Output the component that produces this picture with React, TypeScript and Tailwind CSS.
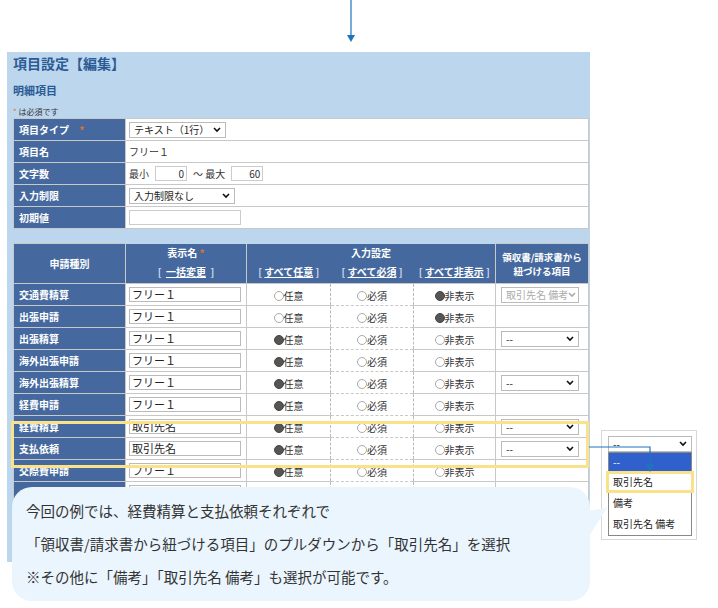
import React from "react";

const F = { fontFamily: '"Noto Sans CJK JP", "Noto Sans", sans-serif' };

function Radio({ on, label }: { on: boolean; label: string }) {
  return (
    <span className="inline-flex items-center text-[10px] leading-[12px] text-[#333] whitespace-nowrap">
      <span className={`inline-block w-[10px] h-[10px] rounded-full border ${on ? "bg-[#555] border-[#444]" : "bg-white border-[#aaa]"}`} />
      {label}
    </span>
  );
}

function Sel({ text, w, dim }: { text: string; w: number; dim?: boolean }) {
  return (
    <div className={`h-[16px] border border-[#bbb] bg-white flex items-center justify-between px-1 text-[10px] leading-[12px] whitespace-nowrap overflow-hidden ${dim ? "text-[#aaa]" : "text-[#222]"}`} style={{ width: w }}>
      <span>{text}</span>
      <svg width="8" height="6" viewBox="0 0 8 6" className="shrink-0"><path d="M1 1l3 3 3-3" stroke={dim ? "#aaa" : "#111"} strokeWidth="1.6" fill="none" /></svg>
    </div>
  );
}

const rows: [string, string, number, boolean | "dim"][] = [
  ["交通費精算", "フリー１", 2, "dim"],
  ["出張申請", "フリー１", 2, false],
  ["出張精算", "フリー１", 0, true],
  ["海外出張申請", "フリー１", 0, false],
  ["海外出張精算", "フリー１", 0, true],
  ["経費申請", "フリー１", 0, false],
  ["経費精算", "取引先名", 0, true],
  ["支払依頼", "取引先名", 0, true],
  ["交際費申請", "フリー１", 0, false],
  ["", "フリー１", 0, false],
];

export default function App() {
  const lab = "bg-[#45699e] text-white font-bold text-[10px] leading-[12px] px-[5px] py-0 border border-[#c8c8c8] whitespace-nowrap";
  const cell = "bg-white border border-[#c8c8c8] text-[10px] leading-[12px] text-[#333] py-0";
  return (
    <div className="relative w-[718px] h-[608px] bg-white overflow-hidden" style={F}>
      <svg className="absolute left-[345px] top-0" width="12" height="44" viewBox="0 0 12 44">
        <path d="M6 0v36" stroke="#1e73be" strokeWidth="1.2" />
        <path d="M2 35l4 7 4-7z" fill="#1e73be" />
      </svg>

      <div className="absolute left-[7px] top-[52px] w-[583px] h-[510px] bg-[#bcd6ee] px-[6px]">
        <div className="text-[14px] font-bold text-[#2b5b94] pt-[1px] leading-[20px]">項目設定【編集】</div>
        <div className="text-[11px] font-bold text-[#2b5b94] mt-[9px] leading-[16px]">明細項目</div>
        <div className="text-[8px] text-[#333] mt-[8px] leading-[11px]"><span className="text-[#e07030]">*</span> は必須です</div>
        <table className="border-collapse table-fixed w-[576px] mt-[1px]">
          <colgroup><col style={{ width: 112 }} /><col /></colgroup>
          <tbody>
            <tr className="h-[22px]"><td className={lab}>項目タイプ <span className="text-[#e07030] ml-2">*</span></td><td className={cell + " px-[3px]"}><Sel text="テキスト（1行）" w={97} /></td></tr>
            <tr className="h-[22px]"><td className={lab}>項目名</td><td className={cell + " px-[3px]"}>フリー１</td></tr>
            <tr className="h-[22px]"><td className={lab}>文字数</td><td className={cell + " px-[3px]"}>
              <span className="inline-flex items-center gap-[6px]">最小<span className="inline-block w-[32px] h-[15px] border border-[#ccc] text-right pr-[2px] leading-[13px]">0</span>〜 最大<span className="inline-block w-[32px] h-[15px] border border-[#ccc] text-right pr-[2px] leading-[13px]">60</span></span>
            </td></tr>
            <tr className="h-[22px]"><td className={lab}>入力制限</td><td className={cell + " px-[3px]"}><Sel text="入力制限なし" w={106} /></td></tr>
            <tr className="h-[22px]"><td className={lab}>初期値</td><td className={cell + " px-[3px]"}><div className="w-[112px] h-[15px] border border-[#ccc]" /></td></tr>
          </tbody>
        </table>

        <table className="border-collapse table-fixed w-[576px] mt-[14px]">
          <colgroup><col style={{ width: 112 }} /><col style={{ width: 121 }} /><col style={{ width: 84 }} /><col style={{ width: 83 }} /><col style={{ width: 82 }} /><col /></colgroup>
          <thead>
            <tr className="h-[18px]">
              <th rowSpan={2} className={lab + " text-center"}>申請種別</th>
              <th className="bg-[#45699e] text-white text-[10px] leading-[12px] font-bold border-x border-[#c8c8c8]">表示名 <span className="text-[#e07030]">*</span></th>
              <th colSpan={3} className="bg-[#45699e] text-white text-[10px] leading-[12px] font-bold border-x border-[#c8c8c8]">入力設定</th>
              <th rowSpan={2} className="bg-[#45699e] text-white font-bold text-[9.5px] leading-[14px] border border-[#c8c8c8] text-center whitespace-nowrap">領収書/請求書から<br />紐づける項目</th>
            </tr>
            <tr className="h-[22px]">
              <th className="bg-[#45699e] text-[#cfdaea] text-[10px] leading-[12px] font-bold border-x border-b border-[#c8c8c8] whitespace-nowrap">[&nbsp; <u className="text-white">一括変更</u> &nbsp;]</th>
              {["すべて任意", "すべて必須", "すべて非表示"].map((t) => (
                <th key={t} className="bg-[#45699e] text-[#cfdaea] text-[10px] leading-[12px] font-bold border-b border-[#c8c8c8] whitespace-nowrap">[ <u className="text-white">{t}</u> ]</th>
              ))}
            </tr>
          </thead>
          <tbody>
            {rows.map(([n, v, r, s], i) => (
              <tr key={i} className="h-[22px]">
                <td className={lab}>{n}</td>
                <td className={cell + " px-[3px]"}><div className="w-[112px] h-[15px] border border-[#bbb] leading-[13px] px-[2px] text-[11px] text-[#222]">{v}</div></td>
                <td className="bg-white border-y border-[#c8c8c8] text-center py-0 leading-[12px]"><Radio on={r === 0} label="任意" /></td>
                <td className="bg-white border-y border-[#c8c8c8] text-center py-0 leading-[12px] border-l border-l-[#bbb] border-dashed border-r border-r-[#bbb]"><Radio on={false} label="必須" /></td>
                <td className="bg-white border-y border-[#c8c8c8] text-center py-0 leading-[12px]"><Radio on={r === 2} label="非表示" /></td>
                <td className={cell + " pl-[5px]"}>{s === "dim" ? <Sel text="取引先名 備考" w={78} dim /> : s ? <Sel text="--" w={78} /> : null}</td>
              </tr>
            ))}
          </tbody>
        </table>
      </div>

      <div className="absolute left-[11px] top-[421px] w-[578px] h-[47px] border-[3px] border-[#fae28a] pointer-events-none" />

      <div className="absolute left-[601px] top-[430px] w-[96px] h-[110px] bg-white border border-[#d8d8d8]">
        <div className="ml-[6px] mt-[5px] w-[84px]"><Sel text="--" w={84} /></div>
        <div className="ml-[6px] w-[84px] border border-[#888] text-[10px] text-[#222]">
          <div className="h-[18px] bg-[#3060cc] text-white px-1 leading-[18px]">--</div>
          <div className="h-[22px] px-1 leading-[16px] border-[3px] border-[#fae28a] -mx-[3px]">取引先名</div>
          <div className="h-[20px] px-1 leading-[20px]">備考</div>
          <div className="h-[22px] px-1 leading-[22px]">取引先名 備考</div>
        </div>
      </div>
      <svg className="absolute left-0 top-0 pointer-events-none" width="718" height="608">
        <path d="M589 447H650V466" stroke="#1e73be" strokeWidth="1.2" fill="none" />
        <path d="M646 464l4 8 4-8z" fill="#1e73be" />
      </svg>

      <div className="absolute left-[12px] top-[487px] w-[578px] h-[114px] bg-[#eaf5fe] rounded-[20px] px-[14px] pt-[7px] text-[14.5px] text-[#333] leading-[33px] whitespace-nowrap">
        <div>今回の例では、経費精算と支払依頼それぞれで</div>
        <div>「領収書/請求書から紐づける項目」のプルダウンから「取引先名」を選択</div>
        <div>※その他に「備考」「取引先名 備考」も選択が可能です。</div>
      </div>
      <svg className="absolute left-[560px] top-[500px]" width="60" height="60" viewBox="0 0 60 60">
        <path d="M0 15 L47 8 L20 50 Z" fill="#eaf5fe" />
      </svg>
    </div>
  );
}
